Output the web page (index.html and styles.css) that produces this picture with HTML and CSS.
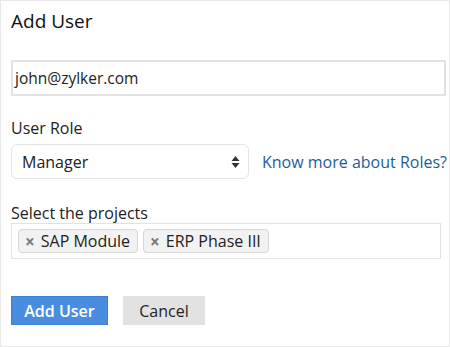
FILE: index.html
```html
<!DOCTYPE html>
<html lang="en">
<head>
    <meta charset="UTF-8">
    <meta name="viewport" content="width=device-width, initial-scale=1.0">
    <title>Add User</title>
    <link rel="stylesheet" href="styles.css">
</head>
<body>
    <div class="panel">
        <h2 class="panel-title">Add User</h2>

        <div class="text-input">john@zylker.com</div>

        <label class="field-label">User Role</label>
        <div class="role-row">
            <div class="select-box">
                <span>Manager</span>
                <svg class="select-arrows" width="9" height="14" viewBox="0 0 9 14">
                    <path d="M4.5 1 L8.5 6 L0.5 6 Z" fill="#333"/>
                    <path d="M0.5 8 L8.5 8 L4.5 13 Z" fill="#333"/>
                </svg>
            </div>
            <a href="#" class="roles-link">Know more about Roles?</a>
        </div>

        <label class="field-label projects-label">Select the projects</label>
        <div class="tag-box">
            <span class="tag"><span class="tag-x">&times;</span>SAP Module</span>
            <span class="tag"><span class="tag-x">&times;</span>ERP Phase III</span>
        </div>

        <div class="actions">
            <button class="btn-primary">Add User</button>
            <button class="btn-cancel">Cancel</button>
        </div>
    </div>
</body>
</html>
```

FILE: styles.css
```css
* {
    margin: 0;
    padding: 0;
    box-sizing: border-box;
    font-family: 'Open Sans', 'Liberation Sans', sans-serif;
}

:root {
    --text: #222;
    --border: #e2e2e2;
    --link: #1d5d9b;
    --primary: #4a8de0;
}

body {
    background: #fff;
    color: var(--text);
}

.panel {
    width: 450px;
    height: 347px;
    border: 1px solid #e8e8e8;
    padding: 0 10px;
}

.panel-title {
    font-size: 19px;
    font-weight: 400;
    line-height: 24px;
    margin-top: 8px;
    color: #111;
}

.text-input {
    margin-top: 27px;
    width: 435px;
    height: 36px;
    border: 2px solid var(--border);
    padding-left: 2px;
    font-size: 15.5px;
    line-height: 32px;
}

.field-label {
    display: block;
    font-size: 16px;
    line-height: 20px;
    margin-top: 22px;
}

.role-row {
    display: flex;
    align-items: center;
    margin-top: 6px;
}

.select-box {
    flex-shrink: 0;
    width: 238px;
    height: 35px;
    border: 1px solid #e4e4e4;
    border-radius: 6px;
    display: flex;
    align-items: center;
    justify-content: space-between;
    padding: 0 8px 0 10px;
    font-size: 16px;
}

.select-arrows {
    display: block;
}

.roles-link {
    margin-left: 13px;
    color: var(--link);
    text-decoration: none;
    font-size: 16px;
    white-space: nowrap;
}

.projects-label {
    margin-top: 24px;
}

.tag-box {
    width: 430px;
    height: 36px;
    border: 1px solid var(--border);
    display: flex;
    align-items: center;
    gap: 5px;
    padding-left: 6px;
}

.tag {
    display: flex;
    align-items: center;
    height: 24px;
    padding: 0 7px 0 6px;
    background: #f2f2f2;
    border: 1px solid #d6d6d6;
    border-radius: 4px;
    font-size: 16px;
}

.tag-x {
    color: #7a7a7a;
    font-size: 17px;
    font-weight: 700;
    margin-right: 6px;
}

.actions {
    display: flex;
    gap: 15px;
    margin-top: 37px;
}

.btn-primary,
.btn-cancel {
    height: 29px;
    border: none;
    font-size: 16px;
    cursor: pointer;
}

.btn-primary {
    width: 97px;
    background: var(--primary);
    border: 1px solid #3d80d4;
    color: #fff;
    font-weight: 600;
}

.btn-cancel {
    width: 82px;
    background: #e2e2e2;
    color: #222;
}
```
